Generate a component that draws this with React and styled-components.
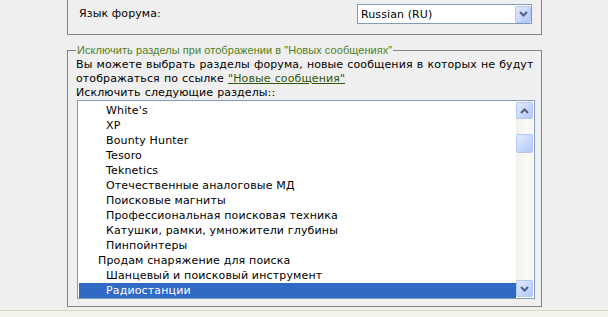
import React from 'react'
import styled, { createGlobalStyle } from 'styled-components'

const GlobalStyle = createGlobalStyle`
    html, body {
        margin: 0;
        padding: 0;
        background: #efefef;
        overflow: hidden;
    }
    body {
        font-family: "DejaVu Sans", Verdana, sans-serif;
        font-size: 11px;
        letter-spacing: 0.1px;
        color: #000;
    }
`

const Content = styled.div`
    margin-left: 67px;
    width: 475px;
`

const TopPanel = styled.div`
    border: 1px solid #858585;
    border-top: 0;
    padding: 4px 9px 10px 11px;
`

const Row = styled.div`
    display: flex;
    justify-content: space-between;
    align-items: center;
`

const Label = styled.span`
    line-height: 14px;
`

const Select = styled.div`
    box-sizing: border-box;
    width: 175px;
    height: 20px;
    border: 1px solid #7f9db9;
    background: #fff;
    display: flex;
    align-items: center;
    justify-content: space-between;
    padding: 0 0 0 3px;
    font-size: 11px;
`

const ScrollButton = styled.div`
    box-sizing: border-box;
    width: ${p => p.w || 17}px;
    height: ${p => p.h || 17}px;
    border: 1px solid #b4c7f1;
    border-radius: 2px;
    background: linear-gradient(135deg, #e3ebfe 0%, #c6d6fc 55%, #b3c8f7 100%);
    display: flex;
    align-items: center;
    justify-content: center;
`

const Fieldset = styled.fieldset`
    margin: 9px 0 0;
    border: 1px solid #858585;
    padding: 2px 6px 7px 8px;
    min-width: 0;
`

const Legend = styled.legend`
    padding: 0 1px;
    font-family: "Liberation Sans", Arial, sans-serif;
    font-size: 11px;
    letter-spacing: 0.05px;
    color: #4f7f23;
`

const Text = styled.div`
    line-height: 14px;
    word-spacing: 0.5px;
`

const Link = styled.a`
    color: #2f5706;
    text-decoration: underline;
`

const ListBox = styled.div`
    box-sizing: border-box;
    display: flex;
    width: 458px;
    height: 199px;
    margin: 0 0 0 1px;
    padding: 1px;
    border: 1px solid #7f9db9;
    background: #fff;
`

const Items = styled.div`
    flex: 1;
    padding-top: 1px;
`

const Item = styled.div`
    height: 15px;
    line-height: 15px;
    padding-left: ${p => p.indent}px;
    white-space: nowrap;
    letter-spacing: 0.15px;
    background: ${p => (p.selected ? '#316ac5' : 'transparent')};
    color: ${p => (p.selected ? '#fff' : '#000')};
`

const Scrollbar = styled.div`
    width: 17px;
    display: flex;
    flex-direction: column;
    background: linear-gradient(to right, #f1efe6 0%, #fbfbf8 60%, #f6f5f0 100%);
`

const Track = styled.div`
    flex: 1;
    padding-top: 15px;
`

const Footer = styled.div`
    margin-top: 3px;
    height: 10px;
    border-top: 1px solid #d6d6cc;
    background: #f4f3e9;
`

const Chevron = ({ up }) => (
    <svg width="9" height="6" viewBox="0 0 9 6">
        <path
            d={up ? 'M1 5 L4.5 1.5 L8 5' : 'M1 1 L4.5 4.5 L8 1'}
            fill="none"
            stroke="#4d6185"
            strokeWidth="2"
        />
    </svg>
)

const sections = [
    { name: "White's", indent: 27 },
    { name: 'XP', indent: 27 },
    { name: 'Bounty Hunter', indent: 27 },
    { name: 'Tesoro', indent: 27 },
    { name: 'Teknetics', indent: 27 },
    { name: 'Отечественные аналоговые МД', indent: 27 },
    { name: 'Поисковые магниты', indent: 27 },
    { name: 'Профессиональная поисковая техника', indent: 27 },
    { name: 'Катушки, рамки, умножители глубины', indent: 27 },
    { name: 'Пинпойнтеры', indent: 27 },
    { name: 'Продам снаряжение для поиска', indent: 19 },
    { name: 'Шанцевый и поисковый инструмент', indent: 27 },
    { name: 'Радиостанции', indent: 27, selected: true },
]

const App = () => {
    return (
        <>
            <GlobalStyle />
            <Content>
                <TopPanel>
                    <Row>
                        <Label>Язык форума:</Label>
                        <Select>
                            <span>Russian (RU)</span>
                            <ScrollButton w={16} h={17}>
                                <Chevron />
                            </ScrollButton>
                        </Select>
                    </Row>
                </TopPanel>

                <Fieldset>
                    <Legend>Исключить разделы при отображении в "Новых сообщениях"</Legend>
                    <Text>
                        Вы можете выбрать разделы форума, новые сообщения в которых не будут
                        <br />
                        отображаться по ссылке <Link href="#">"Новые сообщения"</Link>
                    </Text>
                    <Text>Исключить следующие разделы::</Text>
                    <ListBox>
                        <Items>
                            {sections.map(s => (
                                <Item key={s.name} indent={s.indent} selected={s.selected}>
                                    {s.name}
                                </Item>
                            ))}
                        </Items>
                        <Scrollbar>
                            <ScrollButton>
                                <Chevron up />
                            </ScrollButton>
                            <Track>
                                <ScrollButton h={19} />
                            </Track>
                            <ScrollButton>
                                <Chevron />
                            </ScrollButton>
                        </Scrollbar>
                    </ListBox>
                </Fieldset>
            </Content>
            <Footer />
        </>
    )
}

export default App
